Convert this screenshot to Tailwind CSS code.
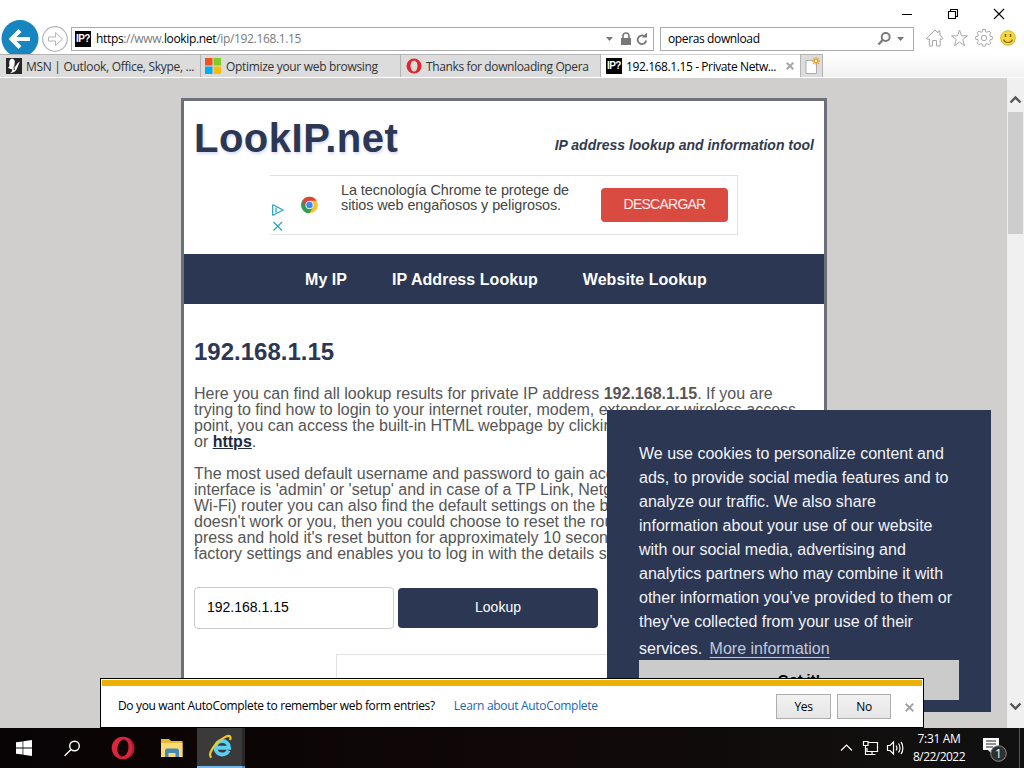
<!DOCTYPE html>
<html lang="en">
<head>
  <meta charset="UTF-8">
  <meta name="viewport" content="width=device-width, initial-scale=1.0">
  <title>192.168.1.15 - Private Network</title>
  <!-- Tailwind CSS -->
  <script src="https://cdn.jsdelivr.net/npm/@tailwindcss/browser@4"></script>
</head>
<body class="w-[1024px] h-[768px] overflow-hidden bg-white relative flex flex-col font-['Open_Sans','Noto_Sans',sans-serif] text-[12px] text-black">

  <!-- Window buttons -->
  <div class="h-[26px] shrink-0 flex justify-end items-center pr-[19px] gap-[34px]">
    <svg width="12" height="12" viewBox="0 0 12 12" class="mt-[2px]"><path d="M1 6.500h10" stroke="#000"/></svg>
    <svg width="12" height="12" viewBox="0 0 12 12" class="mt-[2px]" fill="none" stroke="#000" stroke-width="1.100"><path d="M1.500 3.500h7v7h-7zM3.500 3.500v-2h7v7h-2"/></svg>
    <svg width="12" height="12" viewBox="0 0 12 12" class="mt-[2px]"><path d="M1 1l10 10M11 1L1 11" stroke="#000" stroke-width="1.100"/></svg>
  </div>

  <!-- Address bar row -->
  <div class="h-[28px] shrink-0 flex items-center">
    <div class="w-[71px] h-[28px] relative shrink-0">
      <svg width="71" height="35" viewBox="0 0 71 35" class="absolute left-0 -top-[7px]">
        <circle cx="20" cy="19.500" r="18.500" fill="#1786c0"/>
        <path d="M30 20H12M20 11.500L11.500 20l8.500 8.500" fill="none" stroke="#fff" stroke-width="4"/>
        <circle cx="55" cy="20" r="12.300" fill="#fff" stroke="#b5b5b5" stroke-width="1.200"/>
        <path d="M48.500 18h7v-4.500l7 6.500-7 6.500v-4.500h-7z" fill="none" stroke="#b5b5b5"/>
      </svg>
    </div>
    <div class="w-[583px] h-[24px] mt-[-2px] border border-[#ababab] flex items-center pl-[3px] pr-[5px]">
      <span class="w-4 h-4 bg-black text-white font-bold text-[10px] leading-4 text-center tracking-[-0.6px] font-['Liberation_Sans',sans-serif]">IP?</span>
      <span class="ml-[5px] tracking-[-0.34px] text-[#7a7a7a] whitespace-nowrap"><span class="text-black">https</span>://www.<span class="text-black">lookip.net</span>/ip/192.168.1.15</span>
      <svg width="42" height="16" viewBox="0 0 42 16" class="ml-auto">
        <path d="M0 6h7l-3.500 4z" fill="#777"/>
        <rect x="15" y="7" width="10" height="7" fill="#777"/><path d="M17 7V5a3 3 0 0 1 6 0v2" fill="none" stroke="#777" stroke-width="1.600"/>
        <path d="M40.200 9.500a4.300 4.300 0 1 1-1.800-4.300" fill="none" stroke="#777" stroke-width="1.800"/><path d="M36 6.500h5V1.500z" fill="#777"/>
      </svg>
    </div>
    <div class="w-[254px] h-[24px] mt-[-2px] ml-[6px] border border-[#ababab] flex items-center pl-[7px] pr-[9px]">
      <span class="tracking-[-0.37px]">operas download</span>
      <svg width="27" height="16" viewBox="0 0 27 16" class="ml-auto">
        <circle cx="8.700" cy="6" r="4" fill="none" stroke="#7a7a7a" stroke-width="1.900"/><path d="M5.700 9L1.500 13.500" stroke="#7a7a7a" stroke-width="2.300"/>
        <path d="M20 6h7l-3.500 4z" fill="#777"/>
      </svg>
    </div>
    <svg width="100" height="24" viewBox="0 0 100 24" class="ml-[10px] mt-[-4px]" fill="none" stroke="#a8a8a8">
      <path d="M2.500 12.500l8.500-8.500 3 3V5h2v4l3 3.500-1.500 1-1.300-.8V20h-3.700v-5.500h-4V20H5.300v-7.300l-1.300.8z"/>
      <path d="M35.500 4l2 5.800h6l-4.800 3.700 1.800 6.200-5-3.700-5 3.700 1.800-6.200-4.800-3.700h6z"/>
      <g transform="translate(60 12)">
        <path d="M-1.300-7.800h2.600l.5 2.300 1.200.5 2-1.300 1.900 1.900-1.300 2 .5 1.200 2.200.5v2.600l-2.200.5-.5 1.200 1.300 2-1.900 1.900-2-1.300-1.200.5-.5 2.200h-2.600l-.5-2.200-1.200-.5-2 1.300-1.900-1.900 1.300-2-.5-1.200-2.200-.5v-2.600l2.200-.5.5-1.200-1.300-2 1.900-1.900 2 1.300 1.200-.5z" transform="translate(0 -.7)"/>
        <circle r="2.700"/>
      </g>
      <circle cx="84" cy="12" r="7.300" fill="#f8d83f" stroke="#d6b52c"/>
      <path d="M81.500 8v3M86.500 8v3" stroke="#7b6414" stroke-width="1.600"/><path d="M79.500 13.500c1.500 4 7.500 4 9 0" stroke="#8a6d14" stroke-width="1.200"/>
    </svg>
  </div>

  <!-- Tabs -->
  <div class="h-[24px] shrink-0 flex items-stretch bg-linear-to-b from-white to-[#f1f1f1] border-b border-white text-[#333] whitespace-nowrap">
    <div class="w-[201px] bg-[#dcdcdc] border-t border-r border-[#b4b4b4] flex items-center pl-[6px] gap-[4px]">
      <svg width="16" height="16" viewBox="0 0 16 16"><path d="M0 0h16v16H0z" fill="#262626"/><path d="M6 .8c2.500 0 3.200 2.500 2.600 5-.3 1.500-.6 2.500.2 3.500C10 8 11 5 14 3.500c-1.500 2.500-2 5.500-3.500 8-1.200 2-3.500 3.500-6.500 3.700 1.500-1 2.500-2.200 2.300-3.700C4.500 11 3 10.500 2 9.500c1.500-.5 1.500-1.500 1.300-3C3 3.500 3.800.8 6 .8z" fill="#fff"/><path d="M8 8.500l.3 3.500" stroke="#262626"/></svg>
      <span class="tracking-[-0.3px] mt-[2px]">MSN | Outlook, Office, Skype, ...</span>
    </div>
    <div class="w-[200px] bg-[#dcdcdc] border-t border-r border-[#b4b4b4] flex items-center pl-[4px] gap-[5px]">
      <svg width="16" height="16" viewBox="0 0 16 16"><path d="M0 0h7.500v7.500H0z" fill="#f1511b"/><path d="M8.500 0H16v7.500H8.500z" fill="#80cc28"/><path d="M0 8.500h7.500V16H0z" fill="#00adef"/><path d="M8.500 8.500H16V16H8.500z" fill="#fbbc09"/></svg>
      <span class="tracking-[-0.32px] mt-[2px]">Optimize your web browsing</span>
    </div>
    <div class="w-[200px] bg-[#dcdcdc] border-t border-r border-[#b4b4b4] flex items-center pl-[5px] gap-[4px]">
      <svg width="16" height="16" viewBox="0 0 16 16"><ellipse cx="8" cy="8" rx="7.500" ry="7.600" fill="#e0252f"/><ellipse cx="8" cy="8" rx="3.500" ry="5.600" fill="#dcdcdc"/></svg>
      <span class="tracking-[-0.37px] mt-[2px]">Thanks for downloading Opera</span>
    </div>
    <div class="w-[199px] bg-white border-t border-[#d0d0d0] flex items-center pl-[5px] text-black">
      <span class="w-4 h-4 bg-black text-white font-bold text-[10px] leading-4 text-center tracking-[-0.6px] font-['Liberation_Sans',sans-serif]">IP?</span>
      <span class="ml-1 tracking-[-0.4px] mt-[2px]">192.168.1.15 - Private Netw...</span>
      <svg width="8" height="8" viewBox="0 0 8 8" class="ml-auto mr-[6px]"><path d="M.7.7l6.600 6.600M7.300.7L.7 7.300" stroke="#a8a8a8" stroke-width="2"/></svg>
    </div>
    <div class="w-[23px] bg-[#dcdcdc] border border-b-0 border-[#b4b4b4] flex items-center justify-center">
      <svg width="18" height="20" viewBox="0 0 18 20"><path d="M3 4.500h10.500v13H3z" fill="#fff" stroke="#999" stroke-width=".8"/><path d="M13 1v8M9 5h8M10.200 2.200l5.600 5.600M15.800 2.200l-5.600 5.600" stroke="#eca42c" stroke-width="1.300"/><circle cx="13" cy="5" r="1.200" fill="#fff3c0"/></svg>
    </div>
  </div>

  <!-- Page viewport -->
  <div class="h-[650px] shrink-0 flex bg-[#d0cfce] overflow-hidden">
    <main class="w-[1007px] h-[650px] overflow-hidden pl-[181px] pt-5 font-['Liberation_Sans',Arial,sans-serif]">
      <div class="w-[646px] h-[800px] bg-white border-[3px] border-[#6d7078]">
        <div class="h-[74px] flex justify-between px-[10px]">
          <h1 class="text-[40px] leading-[46px] mt-[14px] font-bold tracking-[0.5px] text-[#2c3753] [text-shadow:1px_2px_3px_#d8dbf4]">LookIP.net</h1>
          <p class="text-[14px] leading-[17px] mt-[36px] font-bold italic text-[#333a4d] whitespace-nowrap">IP address lookup and information tool</p>
        </div>

        <!-- Ad banner -->
        <div class="w-[468px] h-[60px] ml-[86px] border border-l-0 border-[#e2e2e2] flex">
          <svg width="71" height="58" viewBox="0 0 71 58" class="shrink-0">
            <path d="M2.700 29v10.500M2.500 28.500l10.500 5.500-10.500 5.500M6 31.500v5" fill="none" stroke="#2aa9c2" stroke-width="1.300"/><path d="M3.500 46l8.500 8.500M12 46L3.500 54.500" stroke="#2aa9c2" stroke-width="1.300"/>
            <g transform="translate(39.500 29)">
              <circle r="8.300" fill="#fbc02d"/>
              <path d="M0 0L-7.200-4.150A8.300 8.300 0 0 0 0 8.300L3.600 2.100z" fill="#2f9e50"/>
              <path d="M-7.200-4.150A8.300 8.300 0 0 1 7.200-4.150H0L-3.500 2z" fill="#db4437"/>
              <circle r="4" fill="#fff"/><circle r="3.200" fill="#4285f4"/>
            </g>
          </svg>
          <p class="text-[14.4px] leading-[15px] tracking-[-0.07px] text-[#444] mt-[7px] whitespace-nowrap">La tecnología Chrome te protege de<br>sitios web engañosos y peligrosos.</p>
          <span class="ml-auto mr-[9px] mt-[12px] w-[127px] h-[34px] rounded-[4px] bg-[#d94b41] text-white/90 text-[14px] leading-[33px] text-center tracking-[-0.75px]">DESCARGAR</span>
        </div>

        <nav class="mt-[19px] h-[50px] bg-[#2c3753] text-white font-bold text-[16px] tracking-[0.05px] flex items-center pl-[121px] pt-[2px] gap-[45px] whitespace-nowrap">
          <a>My IP</a>
          <a>IP Address Lookup</a>
          <a>Website Lookup</a>
        </nav>

        <section class="px-[10px] text-[#555] text-[16px] leading-4 whitespace-nowrap">
          <h2 class="text-[24px] leading-[28px] mt-[34px] font-bold text-[#2c3753]">192.168.1.15</h2>
          <p class="mt-5">Here you can find all lookup results for private IP address <b>192.168.1.15</b>. If you are<br>
            trying to find how to login to your internet router, modem, extender or wireless access<br>
            point, you can access the built-in HTML webpage by clicking<br>
            or <b class="text-[#222b3d] underline">https</b>.</p>
          <p class="mt-4">The most used default username and password to gain access<br>
            interface is 'admin' or 'setup' and in case of a TP Link, Netgear<br>
            Wi-Fi) router you can also find the default settings on the back<br>
            doesn't work or you, then you could choose to reset the router<br>
            press and hold it's reset button for approximately 10 seconds<br>
            factory settings and enables you to log in with the details su</p>
          <div class="mt-[25px] flex gap-1 text-[14px]">
            <div class="w-[200px] h-[42px] rounded-[4px] border border-[#ccc] text-black leading-[39px] pl-3">192.168.1.15</div>
            <div class="w-[200px] h-[40px] mt-px rounded-[4px] bg-[#2c3753] text-white leading-[39px] text-center">Lookup</div>
          </div>
          <div class="ml-[142px] mt-[25px] w-[336px] h-[100px] border border-[#e2e2e2]"></div>
        </section>
      </div>
    </main>

    <!-- Scrollbar -->
    <div class="w-[17px] bg-[#f0f0f0] flex flex-col items-center pt-[17px] pb-[17px]">
      <svg width="13" height="9" viewBox="0 0 13 9"><path d="M1.500 7.500l5-5 5 5" fill="none" stroke="#555" stroke-width="2.300"/></svg>
      <div class="mt-[8px] w-[15px] h-[122px] bg-[#cdcdcd]"></div>
      <svg width="13" height="9" viewBox="0 0 13 9" class="mt-auto"><path d="M1.500 1.500l5 5 5-5" fill="none" stroke="#555" stroke-width="2.300"/></svg>
    </div>
  </div>

  <!-- Cookie notice -->
  <div class="absolute left-[607px] top-[410px] w-[384px] h-[302px] bg-[#2c3753] px-8 pt-8 text-[#f2f4fa] text-[16px] leading-6 font-['Liberation_Sans',Arial,sans-serif] whitespace-nowrap">
    <p>We use cookies to personalize content and<br>ads, to provide social media features and to<br>analyze our traffic. We also share<br>information about your use of our website<br>with our social media, advertising and<br>analytics partners who may combine it with<br>other information you’ve provided to them or<br>they’ve collected from your use of their</p>
    <p class="mt-[3px] h-[23px]">services. <span class="ml-[3px] text-[#c3c9dc] underline underline-offset-[3px] decoration-1">More information</span></p>
    <div class="h-[40px] bg-[#cbcbcb] text-black text-[14.4px] font-bold leading-[40px] text-center">Got it!</div>
  </div>

  <!-- AutoComplete prompt -->
  <div class="absolute left-[100px] top-[678px] w-[824px] h-[50px] bg-white border border-black">
    <div class="h-[6px] mx-px mt-px bg-[#edb005]"></div>
    <div class="h-[40px] flex items-center pl-[17px] pr-[9px] whitespace-nowrap">
      <span class="tracking-[-0.34px]">Do you want AutoComplete to remember web form entries?</span>
      <a class="ml-[19px] text-[#1a66b3] tracking-[-0.32px]">Learn about AutoComplete</a>
      <span class="ml-auto w-[55px] h-[25px] border border-[#adadad] bg-linear-to-b from-[#f2f2f2] to-[#e6e6e6] text-center leading-[23px] tracking-[-0.4px]">Yes</span>
      <span class="ml-[6px] w-[54px] h-[25px] border border-[#adadad] bg-linear-to-b from-[#f2f2f2] to-[#e6e6e6] text-center leading-[23px] tracking-[-0.4px]">No</span>
      <svg width="9" height="9" viewBox="0 0 8 8" class="ml-[14px] mt-[2px]"><path d="M.7.7l6.600 6.600M7.300.7L.7 7.300" stroke="#a3a3a3" stroke-width="1.700"/></svg>
    </div>
  </div>

  <!-- Taskbar -->
  <footer class="h-[40px] shrink-0 bg-linear-to-r from-[#080304] via-[#100808] to-[#111] flex items-center text-white">
    <div class="w-12 flex justify-center"><svg width="16" height="16" viewBox="0 0 16 16" fill="#fff"><path d="M0 2.300l6.600-.9v6.200H0zM7.300 1.200L16 0v7.600H7.300zM0 8.400h6.600v6.200L0 13.700zM7.300 8.400H16V16l-8.700-1.200z"/></svg></div>
    <div class="w-[49px] flex justify-center"><svg width="17" height="17" viewBox="0 0 17 17" fill="none" stroke="#fff" stroke-width="1.400"><circle cx="10.500" cy="6" r="4.800"/><path d="M7 9.500L.7 15.800"/></svg></div>
    <div class="w-[52px] flex justify-center"><svg width="24" height="24" viewBox="0 0 24 24"><circle cx="12" cy="12" r="11.300" fill="#d9263a"/><path d="M15 2.500c7 2 9 14 1 19.500 5-.8 7.300-5.500 7.300-10S20 3.500 15 2.500z" fill="#ab1c2d"/><ellipse cx="12" cy="12" rx="5.500" ry="8.600" fill="#100607" transform="rotate(8 12 12)"/></svg></div>
    <div class="w-[46px] flex justify-center"><svg width="22" height="19" viewBox="0 0 22 19"><path d="M0 0h8l2 2h11.500v16H0z" fill="#e8b838"/><path d="M0 4h21.500v14H0z" fill="#fbd976"/><path d="M4 18v-7l1.500-1.500h11L18 11v7h-3.500v-4h-7v4z" fill="#4689b0"/></svg></div>
    <div class="w-[2px]"></div>
    <div class="w-[45px] h-full bg-[#3a3a3b] border-b-2 border-[#76b9ed] flex items-center justify-center">
      <svg width="26" height="26" viewBox="0 0 26 26" fill="none">
        <path d="M21.500 16.500c-1.500 3.200-4 4-6.300 4-3.700 0-6.700-2.700-6.700-6.700s3-6.800 6.700-6.800 6.800 2.700 6.800 6.700H9" stroke="#5bd0f5" stroke-width="4"/>
        <path d="M4.500 23.500c-3-1.500-1-8 5-14S21.500.8 23 2.500c.8.900.5 2.300 0 3.500" stroke="#f2c92b" stroke-width="2.200"/>
      </svg>
    </div>
    <div class="w-[3px] h-full bg-[#29292a] border-b-2 border-[#5a8db5]"></div>
    <div class="ml-auto flex items-center h-full">
      <svg width="64" height="18" viewBox="0 0 64 18" fill="none" stroke="#fff" stroke-width="1.200">
        <path d="M1 11.500L6.500 6l5.500 5.500"/>
        <path d="M28 3.500h9.500v9H27V9M23.500 2.500h4.500v4h-4.500zM25.500 6.500v9h4M32 12.500v3M28.500 15.500h7"/>
        <path d="M47.500 6.500h2.500l3.500-3.500v12l-3.500-3.500h-2.500zM56 6.500c1.200 1.500 1.200 3.500 0 5M58.500 4.500c2 2.500 2 6.500 0 9M61 3c2.500 3 2.500 9 0 12"/>
      </svg>
      <div class="w-[60px] ml-[5px] text-center leading-[18px] tracking-[-0.35px] whitespace-nowrap"><div>7:31 AM</div><div class="tracking-[-0.53px]">8/22/2022</div></div>
      <svg width="26" height="28" viewBox="0 0 26 28" class="ml-[13px]">
        <path d="M1 4h16v12H9v3l-3-3H1z" fill="#fff"/><path d="M4 7h10M4 10h10M4 13h7" stroke="#222"/>
        <circle cx="16.500" cy="19.500" r="7.800" fill="#303030" stroke="#8c8c8c"/>
        <text x="16.500" y="23.700" text-anchor="middle" font-size="12" fill="#fff">1</text>
      </svg>
      <div class="w-px h-full bg-[#555] ml-[11px] mr-[4px]"></div>
    </div>
  </footer>
</body>
</html>
